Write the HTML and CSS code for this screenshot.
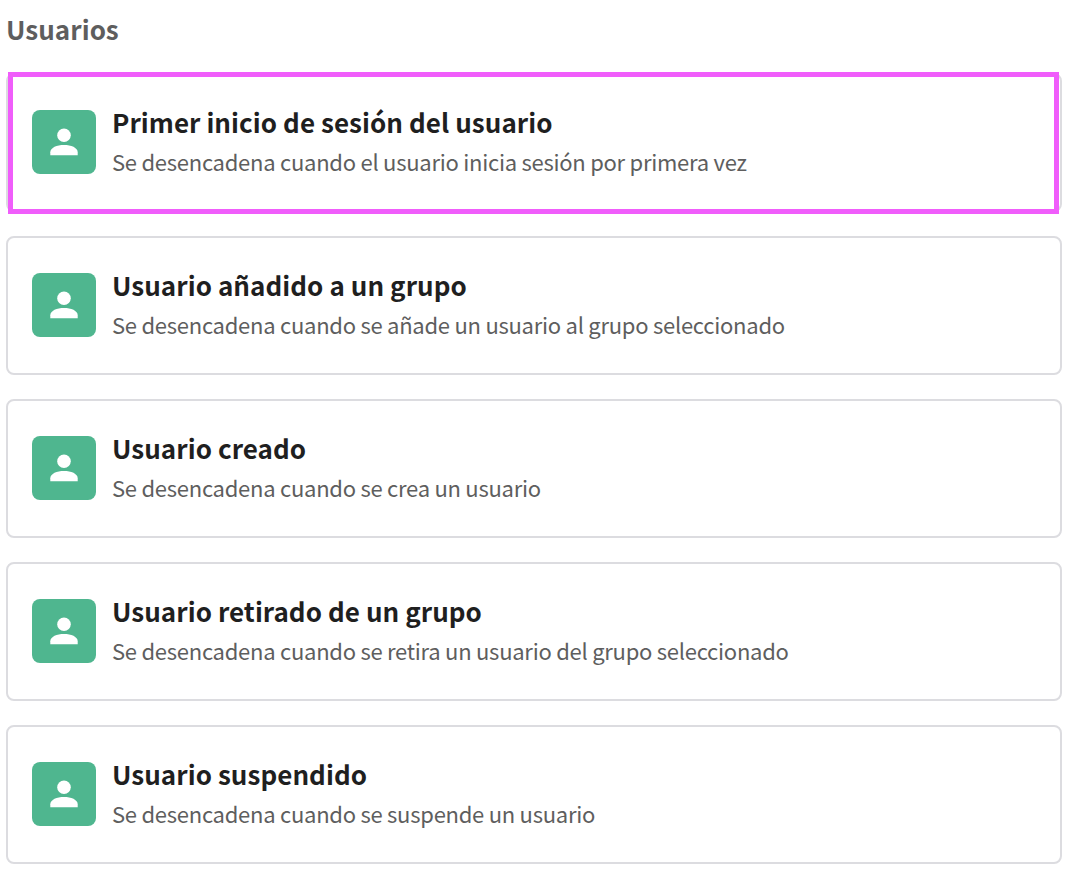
FILE: index.html
```html
<!DOCTYPE html>
<html lang="es">
<head>
  <meta charset="UTF-8">
  <meta name="viewport" content="width=device-width, initial-scale=1.0">
  <title>Usuarios</title>
  <link rel="stylesheet" href="styles.css">
</head>
<body>
  <!-- Shared user icon -->
  <svg class="hidden">
    <symbol id="user-icon" viewBox="0 0 28 28">
      <circle cx="14" cy="7.3" r="6.8"/>
      <path d="M0.3 27.3V24.2C0.3 19.6 7 17 14 17s13.7 2.6 13.7 7.2v3.1z"/>
    </symbol>
  </svg>

  <div class="container">
    <h1>Usuarios</h1>

    <div class="card selected">
      <div class="icon"><svg><use href="#user-icon"/></svg></div>
      <div class="content">
        <h2>Primer inicio de sesión del usuario</h2>
        <p>Se desencadena cuando el usuario inicia sesión por primera vez</p>
      </div>
    </div>

    <div class="card">
      <div class="icon"><svg><use href="#user-icon"/></svg></div>
      <div class="content">
        <h2>Usuario añadido a un grupo</h2>
        <p>Se desencadena cuando se añade un usuario al grupo seleccionado</p>
      </div>
    </div>

    <div class="card">
      <div class="icon"><svg><use href="#user-icon"/></svg></div>
      <div class="content">
        <h2>Usuario creado</h2>
        <p>Se desencadena cuando se crea un usuario</p>
      </div>
    </div>

    <div class="card">
      <div class="icon"><svg><use href="#user-icon"/></svg></div>
      <div class="content">
        <h2>Usuario retirado de un grupo</h2>
        <p>Se desencadena cuando se retira un usuario del grupo seleccionado</p>
      </div>
    </div>

    <div class="card">
      <div class="icon"><svg><use href="#user-icon"/></svg></div>
      <div class="content">
        <h2>Usuario suspendido</h2>
        <p>Se desencadena cuando se suspende un usuario</p>
      </div>
    </div>
  </div>
</body>
</html>
```
FILE: styles.css
```css
* {
  box-sizing: border-box;
}
body {
  font-family: "Noto Sans CJK JP", "Noto Sans", sans-serif;
  margin: 0;
  background-color: #fff;
}
.hidden {
  display: none;
}
.container {
  display: flex;
  flex-direction: column;
  gap: 24px;
  padding: 9px 10px 0 6px;
}
h1, h2, p {
  margin: 0;
  white-space: nowrap;
}
h1 {
  height: 40px;
  color: #5e5e5e;
  font-size: 26px;
  font-weight: bold;
  line-height: 39px;
  letter-spacing: 0.06px;
}
.card {
  position: relative;
  display: flex;
  gap: 16px;
  height: 139px;
  padding: 35px 24px;
  border: 2px solid #dcdce0;
  border-radius: 8px;
}
/* square frame drawn over the selected card */
.selected::after {
  content: "";
  box-sizing: border-box;
  position: absolute;
  top: -3.5px;
  left: -0.5px;
  width: 1051px;
  height: 142px;
  border: 5px solid #f05dfb;
}
.icon {
  display: flex;
  justify-content: center;
  align-items: center;
  width: 64px;
  height: 64px;
  border-radius: 8px;
  background-color: #4fb68f;
}
.icon svg {
  width: 28px;
  height: 28px;
  fill: #fff;
}
.content {
  margin-top: -2px;
}
h2 {
  color: #1f1f1f;
  font-size: 26px;
  font-weight: bold;
  line-height: 28px;
  letter-spacing: 0.06px;
}
p {
  margin-top: 10px;
  color: #5e5e5e;
  font-size: 22px;
  line-height: 30px;
  letter-spacing: -0.26px;
}
```
